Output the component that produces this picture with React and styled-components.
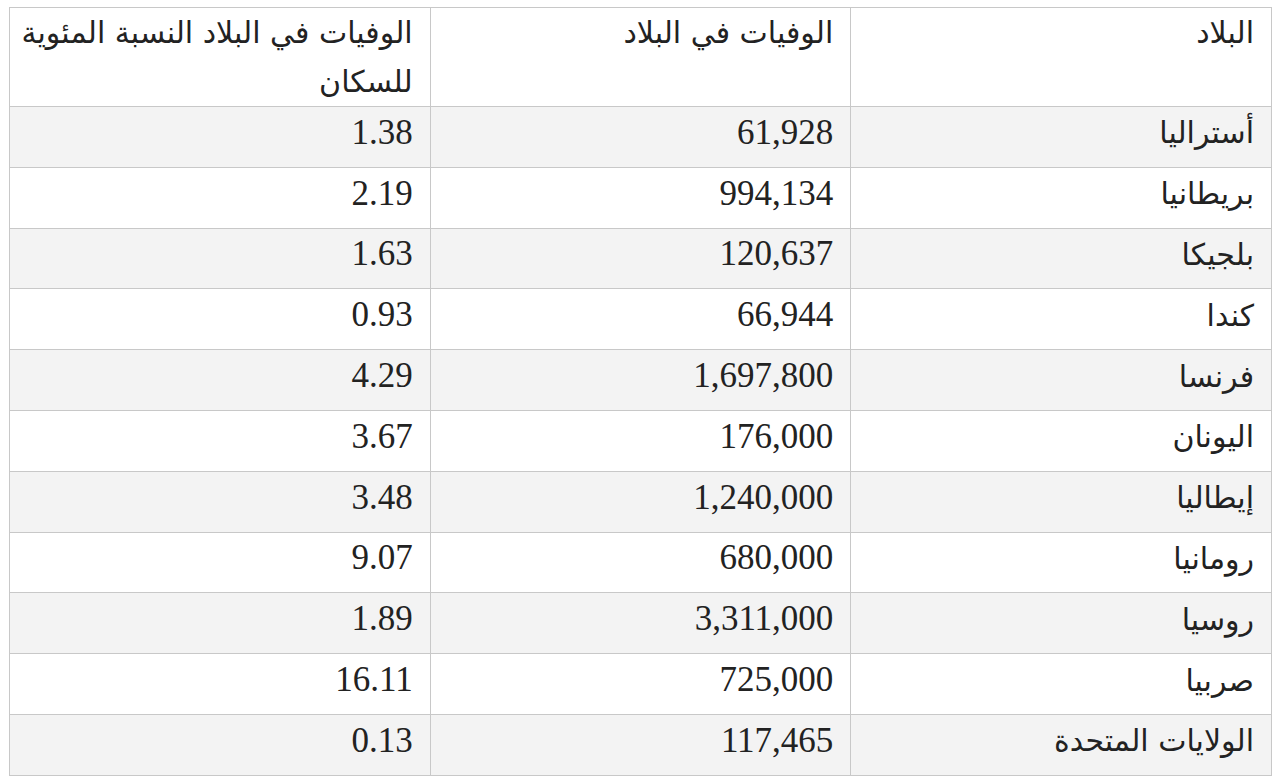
import React from "react"
import styled, { createGlobalStyle } from "styled-components"

const GlobalStyle = createGlobalStyle`
  html, body {
    margin: 0;
    padding: 0;
    background: #fff;
  }
`

const Page = styled.div`
  padding: 7px 8px 0 9px;
`

const Table = styled.table`
  width: 100%;
  border-collapse: collapse;
  table-layout: fixed;
  direction: rtl;
  font-family: "Liberation Serif", "DejaVu Sans", serif;
  font-size: 35px;
  color: #222;
  border: 1px solid #c8c8c8;
`

const HeadCell = styled.th`
  font-family: "DejaVu Sans", sans-serif;
  font-weight: normal;
  font-size: 30px;
  text-align: right;
  vertical-align: top;
  line-height: 49px;
  height: 98px;
  padding: 0 17px 0 4px;
  border: 1px solid #c8c8c8;
  box-sizing: border-box;
`

const Row = styled.tr`
  background: ${p => (p.$shaded ? "#f3f3f3" : "#fff")};
`

const Cell = styled.td`
  text-align: right;
  vertical-align: middle;
  height: 60.8px;
  padding: 0 17px 8px 17px;
  border: 1px solid #c8c8c8;
  box-sizing: border-box;
  font-family: ${p => (p.$arabic ? '"DejaVu Sans", sans-serif' : '"Liberation Serif", serif')};
  font-size: ${p => (p.$arabic ? "30px" : "35px")};
`

const rows = [
  ["أستراليا", "61,928", "1.38"],
  ["بريطانيا", "994,134", "2.19"],
  ["بلجيكا", "120,637", "1.63"],
  ["كندا", "66,944", "0.93"],
  ["فرنسا", "1,697,800", "4.29"],
  ["اليونان", "176,000", "3.67"],
  ["إيطاليا", "1,240,000", "3.48"],
  ["رومانيا", "680,000", "9.07"],
  ["روسيا", "3,311,000", "1.89"],
  ["صربيا", "725,000", "16.11"],
  ["الولايات المتحدة", "117,465", "0.13"],
]

export default function App() {
  return (
    <>
      <GlobalStyle />
      <Page>
        <Table>
          <thead>
            <tr>
              <HeadCell>البلاد</HeadCell>
              <HeadCell>الوفيات في البلاد</HeadCell>
              <HeadCell>الوفيات في البلاد النسبة المئوية للسكان</HeadCell>
            </tr>
          </thead>
          <tbody>
            {rows.map((r, i) => (
              <Row key={r[0]} $shaded={i % 2 === 0}>
                <Cell $arabic>{r[0]}</Cell>
                <Cell>{r[1]}</Cell>
                <Cell>{r[2]}</Cell>
              </Row>
            ))}
          </tbody>
        </Table>
      </Page>
    </>
  )
}
